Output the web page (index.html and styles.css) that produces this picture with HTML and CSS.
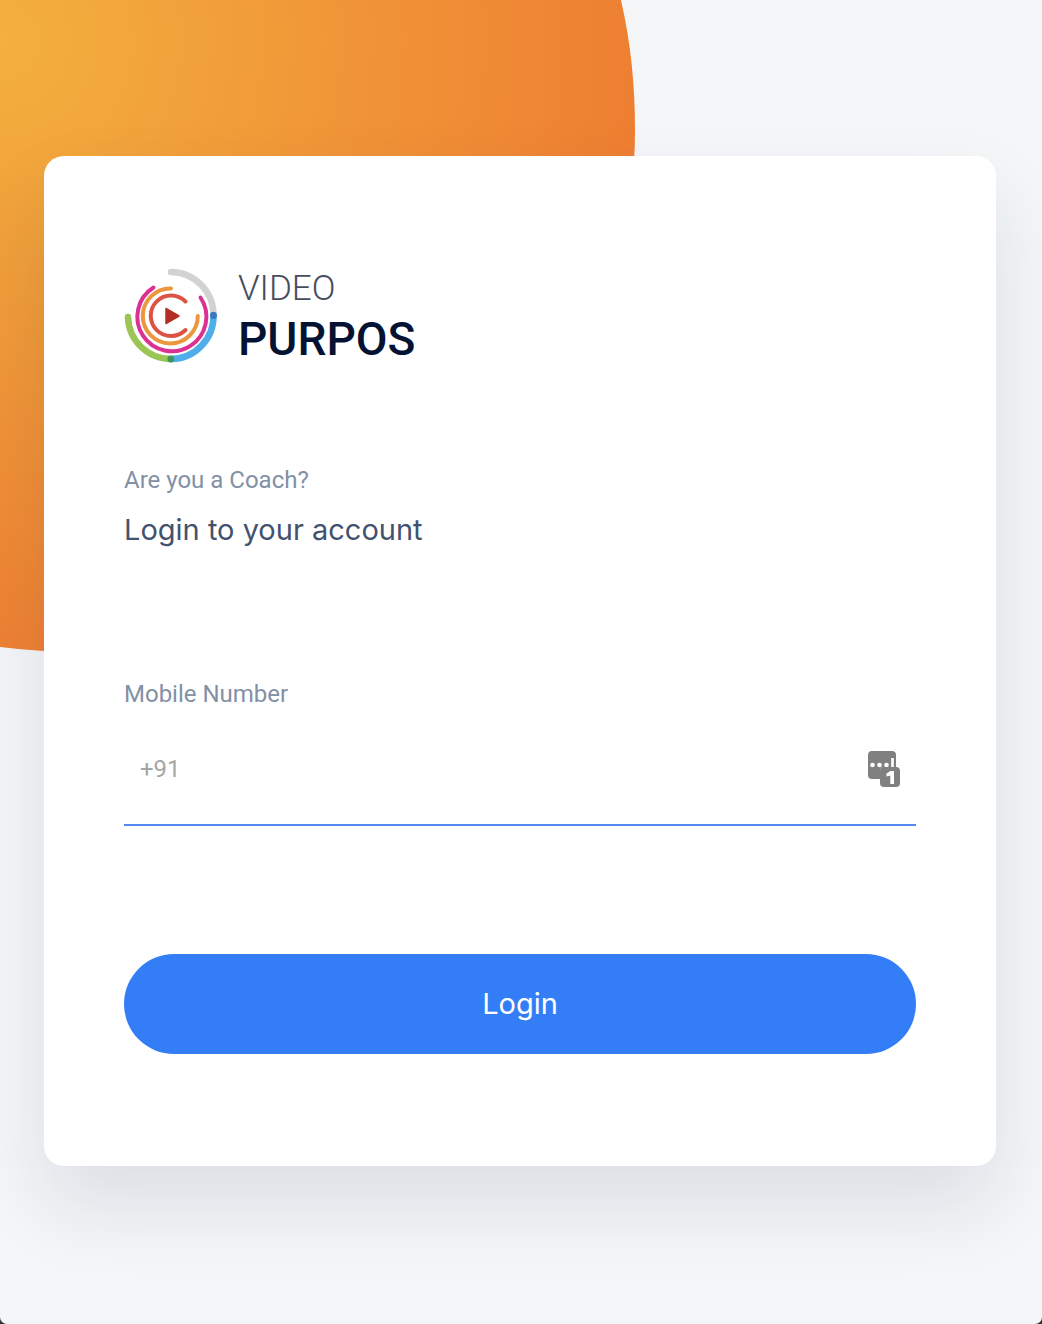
FILE: index.html
```html
<!DOCTYPE html>
<html lang="en">
<head>
<meta charset="utf-8">
<meta name="viewport" content="width=device-width, initial-scale=1">
<title>Video Purpos - Login</title>
<link rel="stylesheet" href="styles.css">
</head>
<body>
<div class="backdrop" aria-hidden="true"></div>
<main class="card">
  <div class="brand">
    <svg class="brand-mark" viewBox="0 0 94 96" fill="none" stroke-linecap="round" aria-hidden="true">
      <path d="M47 4A43 43 0 0 1 89.500 47" stroke="#d0d2d3" stroke-width="6.500"/>
      <path d="M4 49A43 43 0 0 0 47 91" stroke="#9bc656" stroke-width="6.500"/>
      <path d="M47 91A43 43 0 0 0 89.500 47" stroke="#4eaee9" stroke-width="6.500"/>
      <circle cx="89.500" cy="47.500" r="3.400" fill="#3b78bd"/>
      <circle cx="46.800" cy="91" r="3.400" fill="#3f9857"/>
      <path d="M29.500 19.500A34.500 34.500 0 1 0 76.500 29.500" stroke="#dc3192" stroke-width="4"/>
      <path d="M47 20.500A27.500 27.500 0 1 0 73.800 48" stroke="#ec973e" stroke-width="4"/>
      <path d="M61.500 33.500A20.300 20.300 0 1 0 61.500 62" stroke="#de5243" stroke-width="4"/>
      <path d="M42 40.500V55.500L55 48Z" fill="#b62d27" stroke="#b62d27" stroke-width="1.500" stroke-linejoin="round"/>
    </svg>
    <div class="brand-name"><span class="brand-top">VIDEO</span><span class="brand-bottom">PURPOS</span></div>
  </div>
  <p class="label">Are you a Coach?</p>
  <h1 class="title">Login to your account</h1>
  <form class="form">
    <label class="label" for="mobile">Mobile Number</label>
    <div class="field">
      <input class="field-input" id="mobile" type="tel" placeholder="+91">
      <svg class="field-icon" viewBox="0 0 32 36" aria-hidden="true">
        <path d="M4 0H24Q28 0 28 4V16H16Q12 16 12 20V28H4Q0 28 0 24V4Q0 0 4 0Z" fill="#808080"/>
        <rect x="12" y="16" width="20" height="20" rx="4" fill="#808080"/>
        <g fill="#fff"><circle cx="4.500" cy="14" r="2.300"/><circle cx="11.500" cy="14" r="2.300"/><circle cx="18.500" cy="14" r="2.300"/><path d="M23.200 7H25.800V16H23.200ZM22.500 20H26V33H22.300V24.500L18.500 25.500V22.500Z"/></g>
      </svg>
    </div>
    <button class="submit" type="submit">Login</button>
  </form>
</main>
</body>
</html>
```
FILE: styles.css
```css
* { box-sizing: border-box; }

html { background: #333; }

body {
  position: relative;
  min-height: 100vh;
  margin: 0;
  padding: 156px 46px 158px 44px;
  border-radius: 0 0 7px 7px;
  background: #f4f6f8;
  font-family: Roboto, "Liberation Sans", sans-serif;
}

.backdrop {
  position: absolute;
  top: 0;
  left: 0;
  width: 635px;
  height: 652px;
  background: radial-gradient(circle at 0 40px, #f3b03e 0, #ee7f32 640px);
  clip-path: path("M0 0H621C631 44 635 86 635 130C635 420 390 652 80 652Q40 652 0 647Z");
}

.card {
  position: relative;
  padding: 112px 80px;
  border-radius: 20px;
  background: #fff;
  box-shadow: 0 40px 80px rgba(31, 35, 70, 0.11);
}

.brand {
  display: flex;
  align-items: flex-start;
  gap: 20px;
  margin-bottom: 96px;
}

.brand-mark { width: 94px; height: 96px; }

.brand-name { display: flex; flex-direction: column; }

.brand-top {
  color: #474d5e;
  font-size: 35px;
  font-weight: 300;
  line-height: 42px;
}

.brand-bottom {
  color: #041333;
  font-size: 46px;
  font-weight: 500;
  line-height: 58px;
}

.label {
  display: block;
  margin: 0;
  color: #8390a5;
  font-size: 24px;
  line-height: 32px;
}

.title {
  margin: 14px 0 128px;
  color: #42526e;
  font-family: Inter, sans-serif;
  font-size: 29px;
  font-weight: 400;
  line-height: 40px;
}

.field {
  display: flex;
  align-items: center;
  height: 116px;
  margin-bottom: 128px;
  padding: 4px 16px 0;
  border-bottom: 2px solid #5489f5;
}

.field-input {
  flex: 1;
  min-width: 0;
  padding: 0;
  border: 0;
  outline: 0;
  background: none;
  color: #42526e;
  font: 24px/32px Roboto, sans-serif;
}

.field-input::placeholder { color: #a5a5a5; }

.field-icon { width: 32px; height: 36px; }

.submit {
  display: block;
  width: 100%;
  height: 100px;
  border: 0;
  border-radius: 50px;
  background: #337ef7;
  color: #fff;
  font: 29px/40px Inter, sans-serif;
}
```
